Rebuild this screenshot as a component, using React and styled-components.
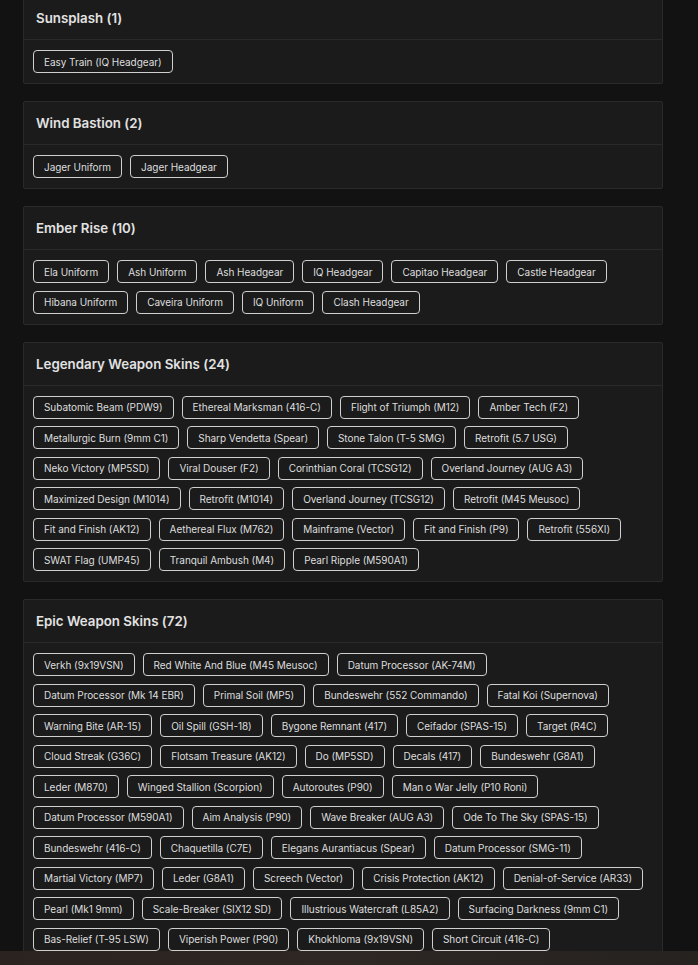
import styled, { createGlobalStyle } from "styled-components"

const GlobalStyle = createGlobalStyle`
  body {
    margin: 0;
    background-color: #121212;
    font-family: Inter, "Open Sans", sans-serif;
    font-feature-settings: "calt" 0;
    overflow: hidden;
  }
`

const sections = [
  { title: "Sunsplash", count: 1, items: ["Easy Train (IQ Headgear)"] },
  { title: "Wind Bastion", count: 2, items: ["Jager Uniform", "Jager Headgear"] },
  {
    title: "Ember Rise",
    count: 10,
    items: [
      "Ela Uniform", "Ash Uniform", "Ash Headgear", "IQ Headgear", "Capitao Headgear",
      "Castle Headgear", "Hibana Uniform", "Caveira Uniform", "IQ Uniform", "Clash Headgear",
    ],
  },
  {
    title: "Legendary Weapon Skins",
    count: 24,
    items: [
      "Subatomic Beam (PDW9)", "Ethereal Marksman (416-C)", "Flight of Triumph (M12)", "Amber Tech (F2)",
      "Metallurgic Burn (9mm C1)", "Sharp Vendetta (Spear)", "Stone Talon (T-5 SMG)", "Retrofit (5.7 USG)",
      "Neko Victory (MP5SD)", "Viral Douser (F2)", "Corinthian Coral (TCSG12)", "Overland Journey (AUG A3)",
      "Maximized Design (M1014)", "Retrofit (M1014)", "Overland Journey (TCSG12)", "Retrofit (M45 Meusoc)",
      "Fit and Finish (AK12)", "Aethereal Flux (M762)", "Mainframe (Vector)", "Fit and Finish (P9)",
      "Retrofit (556XI)", "SWAT Flag (UMP45)", "Tranquil Ambush (M4)", "Pearl Ripple (M590A1)",
    ],
  },
  {
    title: "Epic Weapon Skins",
    count: 72,
    items: [
      "Verkh (9x19VSN)", "Red White And Blue (M45 Meusoc)", "Datum Processor (AK-74M)",
      "Datum Processor (Mk 14 EBR)", "Primal Soil (MP5)", "Bundeswehr (552 Commando)", "Fatal Koi (Supernova)",
      "Warning Bite (AR-15)", "Oil Spill (GSH-18)", "Bygone Remnant (417)", "Ceifador (SPAS-15)", "Target (R4C)",
      "Cloud Streak (G36C)", "Flotsam Treasure (AK12)", "Do (MP5SD)", "Decals (417)", "Bundeswehr (G8A1)",
      "Leder (M870)", "Winged Stallion (Scorpion)", "Autoroutes (P90)", "Man o War Jelly (P10 Roni)",
      "Datum Processor (M590A1)", "Aim Analysis (P90)", "Wave Breaker (AUG A3)", "Ode To The Sky (SPAS-15)",
      "Bundeswehr (416-C)", "Chaquetilla (C7E)", "Elegans Aurantiacus (Spear)", "Datum Processor (SMG-11)",
      "Martial Victory (MP7)", "Leder (G8A1)", "Screech (Vector)", "Crisis Protection (AK12)", "Denial-of-Service (AR33)",
      "Pearl (Mk1 9mm)", "Scale-Breaker (SIX12 SD)", "Illustrious Watercraft (L85A2)", "Surfacing Darkness (9mm C1)",
      "Bas-Relief (T-95 LSW)", "Viperish Power (P90)", "Khokhloma (9x19VSN)", "Short Circuit (416-C)",
    ],
  },
]

const Page = styled.div`
  margin-top: -4px;
  padding: 0 35px 0 23px;
  display: flex;
  flex-direction: column;
  gap: 17px;
`

const Card = styled.section`
  background-color: #1b1b1b;
  border: 1px solid #2a2a2a;
  border-radius: 2px;
`

const CardHeader = styled.h3`
  margin: 0;
  height: 42px;
  padding: 0 12px;
  display: flex;
  align-items: center;
  border-bottom: 1px solid #2a2a2a;
  color: #e2e2e2;
  font-size: 13.3px;
  font-weight: 600;
`

const CardBody = styled.div`
  padding: 10px 9px;
  display: flex;
  flex-wrap: wrap;
  gap: 7.5px 8px;
`

const Chip = styled.span`
  box-sizing: border-box;
  height: 23px;
  padding: 0 10px;
  display: inline-flex;
  align-items: center;
  border: 1px solid #cfcfcf;
  border-radius: 4px;
  color: #dedede;
  font-size: 10px;
  letter-spacing: -0.05px;
  white-space: nowrap;
`

const BottomBar = styled.div`
  position: fixed;
  left: 0;
  right: 0;
  bottom: 0;
  height: 14px;
  background: linear-gradient(90deg, #2a2320, #2e2724 50%, #252220);
`

function App() {
  return (
    <>
      <GlobalStyle />
      <Page>
        {sections.map((s) => (
          <Card key={s.title}>
            <CardHeader>{s.title} ({s.count})</CardHeader>
            <CardBody>
              {s.items.map((item) => (
                <Chip key={item}>{item}</Chip>
              ))}
            </CardBody>
          </Card>
        ))}
      </Page>
      <BottomBar />
    </>
  )
}

export default App
